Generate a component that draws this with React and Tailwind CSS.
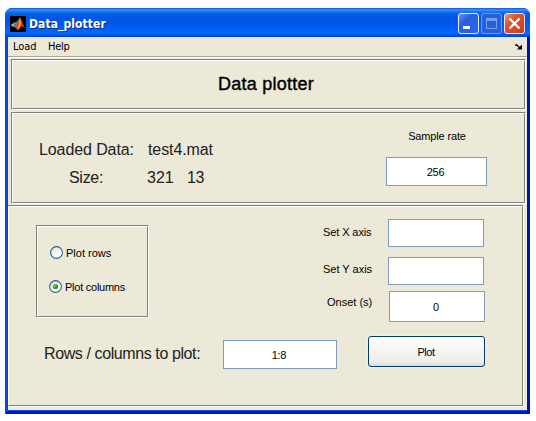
import React from "react";

const sans = "font-['Liberation_Sans',Arial,sans-serif]";

function Field({ value = "", className = "" }) {
  return (
    <div className={`flex shrink-0 items-center justify-center border border-[#7f9db9] bg-white pr-[2px] text-[11px] leading-none tracking-[-0.3px] ${className}`}>
      <span className="mt-[2px]">{value}</span>
    </div>
  );
}

// Etched frame: grey/white double line, highlight on the lower right.
function Panel({ className = "", children }) {
  return (
    <div className={`shrink-0 border border-t-[#808080] border-r-white border-b-white border-l-[#808080] ${className}`}>
      <div className="h-full border border-t-white border-r-[#808080] border-b-[#808080] border-l-white">{children}</div>
    </div>
  );
}

function Radio({ label, checked, className = "", textClass = "" }) {
  return (
    <div className={`flex h-[13px] items-center gap-[3px] ${className}`}>
      <svg width="13" height="13" viewBox="0 0 13 13" className="shrink-0">
        <defs>
          <linearGradient id="well" x1="0" y1="0" x2="1" y2="1">
            <stop offset="0" stopColor="#d9d8d0" />
            <stop offset="0.7" stopColor="#ffffff" />
          </linearGradient>
          <radialGradient id="dot" cx="0.35" cy="0.35">
            <stop offset="0" stopColor="#62d85c" />
            <stop offset="1" stopColor="#1e9a1c" />
          </radialGradient>
        </defs>
        <circle cx="6.5" cy="6.5" r="5.9" fill="url(#well)" stroke="#2c5e8c" strokeWidth="1.1" />
        {checked && <circle cx="6.5" cy="6.5" r="2.6" fill="url(#dot)" />}
      </svg>
      <span className={`mt-[2px] whitespace-nowrap text-[11px] leading-[13px] ${textClass}`}>{label}</span>
    </div>
  );
}

function TitleBar() {
  return (
    <div className="flex h-[29px] shrink-0 items-center bg-[linear-gradient(180deg,#0a54dc_0%,#3d95ff_7%,#1b76f5_12%,#0560e8_20%,#0055e5_35%,#0058ea_55%,#0263fb_75%,#0266ff_88%,#0050e0_95%,#003fcc_100%)] pl-[5px] pr-[5px]">
      <svg width="16" height="16" viewBox="0 0 16 16" className="mt-0.5 shrink-0">
        <rect width="16" height="16" fill="#000" />
        <path d="M0.5 9 L4.5 6.5 L6.5 7 L5 10.5 L3.5 11 Z" fill="#7fb4d4" />
        <path d="M4.5 6.5 L7 5.5 L9.5 1.5 L7.5 9 L5 11 L3.5 11 Z" fill="#4b8494" />
        <path d="M10 1 L8.5 5 L6 9.5 L4 11 L6 12 L7.5 14.5 L10 12 Z" fill="#d9531e" />
        <path d="M10 1 L9 8 L8 13.5 L10.5 10.5 L12 7 Z" fill="#f9a648" />
        <path d="M10 1 L12 5 L15 12.5 L12.5 10.5 L10.5 11 L11 6 Z" fill="#c23a18" />
      </svg>
      <span className="ml-[3px] mt-[3px] font-['DejaVu_Sans_Condensed','DejaVu_Sans',sans-serif] text-[12px] font-bold leading-4 tracking-[0.08px] text-white [font-stretch:condensed] [text-shadow:1px_1px_0_#0a2a80]">
        Data_plotter
      </span>
      <div className="ml-auto mt-px flex gap-[2px]">
        <svg width="21" height="21" viewBox="0 0 21 21">
          <defs>
            <linearGradient id="blue" x1="0" y1="0" x2="1" y2="1">
              <stop offset="0" stopColor="#6c98f3" />
              <stop offset="0.35" stopColor="#2a5de0" />
              <stop offset="1" stopColor="#2468ee" />
            </linearGradient>
          </defs>
          <rect x="0.5" y="0.5" width="20" height="20" rx="2.5" fill="url(#blue)" stroke="#e6eefc" />
          <rect x="5" y="13" width="7" height="3" fill="#fff" />
        </svg>
        <svg width="21" height="21" viewBox="0 0 21 21">
          <rect x="0.5" y="0.5" width="20" height="20" rx="2.5" fill="#2560dc" stroke="#6f9bee" />
          <path d="M5.5 6.5 V15.5 H15.5 V6.5" fill="none" stroke="#789fec" />
          <rect x="5" y="5" width="11" height="3" fill="#789fec" />
        </svg>
        <svg width="21" height="21" viewBox="0 0 21 21">
          <defs>
            <linearGradient id="red" x1="0" y1="0" x2="1" y2="1">
              <stop offset="0" stopColor="#f09a80" />
              <stop offset="0.35" stopColor="#e35330" />
              <stop offset="1" stopColor="#cc3c12" />
            </linearGradient>
          </defs>
          <rect x="0.5" y="0.5" width="20" height="20" rx="2.5" fill="url(#red)" stroke="#f8e6e2" />
          <path d="M5.5 5.5 L15.5 15.5 M15.5 5.5 L5.5 15.5" stroke="#fff" strokeWidth="2.3" />
        </svg>
      </div>
    </div>
  );
}

export default function App() {
  return (
    <div className={`h-[421px] w-[536px] overflow-hidden bg-white pl-[5px] pt-2 text-black ${sans}`}>
      <div className="flex h-[406px] w-[525px] flex-col overflow-hidden rounded-t-[7px] bg-[#0a3fd0]">
        <TitleBar />
        <div className="flex h-[377px] flex-col border-x-[3px] border-b-[3px] border-b-[#0019a8] border-l-[#0848d8] border-r-[#00189c]">
          <div className="flex h-[374px] flex-col border-b border-b-[#0b4fe6] bg-[#ece9d8]">
            <div className="flex h-5 shrink-0 items-center border-b border-[#aca899] pl-[5px] pr-[5px] font-['DejaVu_Sans_Condensed','DejaVu_Sans',sans-serif] text-[11px] leading-none [font-stretch:condensed]">
              <span className="w-[35px] tracking-[-0.1px]">Load</span>
              <span className="tracking-[-0.3px]">Help</span>
              <svg width="7" height="6" viewBox="0 0 7 6" className="ml-auto mt-px">
                <path d="M0 1.5 L1.5 0.7 L5 4" fill="none" stroke="#000" strokeWidth="1.3" />
                <path d="M7 0.5 V5.5 H2 Z" fill="#000" />
              </svg>
            </div>
            <div className="h-px shrink-0 bg-white" />

            <Panel className="ml-[3px] mt-px h-[51px] w-[515px]">
              <div className="pl-[205px] pt-[13px] text-[18px] leading-5 tracking-[0.25px] [-webkit-text-stroke:0.4px_black]">Data plotter</div>
            </Panel>

            <Panel className="ml-[3px] mt-[2px] h-[92px] w-[515px]">
              <div className="flex">
                <div className="w-[373px] pt-[22px] text-[16px] leading-7 text-[#222]">
                  <div className="flex">
                    <div className="w-[135px] pl-[26px] tracking-[-0.1px]">Loaded Data:</div>
                    <div className="tracking-[-0.1px]">test4.mat</div>
                  </div>
                  <div className="flex">
                    <div className="w-[134px] pl-[56px] tracking-[-0.3px]">Size:</div>
                    <div className="w-[40px]">321</div>
                    <div className="tracking-[-0.3px]">13</div>
                  </div>
                </div>
                <div className="flex flex-col items-center pt-[16px]">
                  <div className="ml-px text-[11px] leading-[13px] tracking-[-0.15px]">Sample rate</div>
                  <Field value="256" className="mt-[14px] h-[29px] w-[101px]" />
                </div>
              </div>
            </Panel>

            <div className="mt-px h-[202px] w-[515px] shrink-0 border-b border-t border-b-white border-t-[#808080]">
              <div className="flex h-full flex-col border border-b-[#808080] border-l-white border-r-[#808080] border-t-white shadow-[1px_0_0_#fff]">
                <div className="flex">
                  <Panel className="ml-[27px] mt-[18px] h-[93px] w-[113px]">
                    <Radio label="Plot rows" className="ml-3 mt-[19px]" />
                    <Radio label="Plot columns" checked className="ml-[11px] mt-[21px]" textClass="tracking-[-0.25px]" />
                  </Panel>
                  <div className="ml-[173px] flex w-[200px] flex-col pt-3">
                    <div className="flex">
                      <div className="w-[66px] pl-px pt-[7px] text-[11px] leading-[13px] tracking-[-0.1px]">Set X axis</div>
                      <Field className="h-[28px] w-24" />
                    </div>
                    <div className="mt-[10px] flex">
                      <div className="w-[66px] pl-px pt-[6px] text-[11px] leading-[13px]">Set Y axis</div>
                      <Field className="h-[28px] w-24" />
                    </div>
                    <div className="mt-[6px] flex">
                      <div className="w-[67px] pl-[5px] pt-[5px] text-[11px] leading-[13px]">Onset (s)</div>
                      <Field value="0" className="h-[31px] w-24" />
                    </div>
                  </div>
                </div>
                <div className="mt-[14px] flex items-start">
                  <div className="w-[214px] pl-[35px] pt-[8px] text-[16px] leading-5 tracking-[-0.4px] text-[#222]">Rows / columns to plot:</div>
                  <Field value="1:8" className="mt-[4px] h-[29px] w-[114px]" />
                  <div className="ml-[31px] flex h-[31px] w-[117px] items-center justify-center rounded-[3px] border border-[#003c74] bg-[linear-gradient(180deg,#fff_0%,#f6f6f2_40%,#efefea_85%,#dcd8ce_100%)] pr-px text-[11px] leading-none tracking-[-0.5px] shadow-[0_0_0_1px_#f1efe4]">
                    <span className="mt-[2px]">Plot</span>
                  </div>
                </div>
              </div>
            </div>
          </div>
        </div>
      </div>
    </div>
  );
}
